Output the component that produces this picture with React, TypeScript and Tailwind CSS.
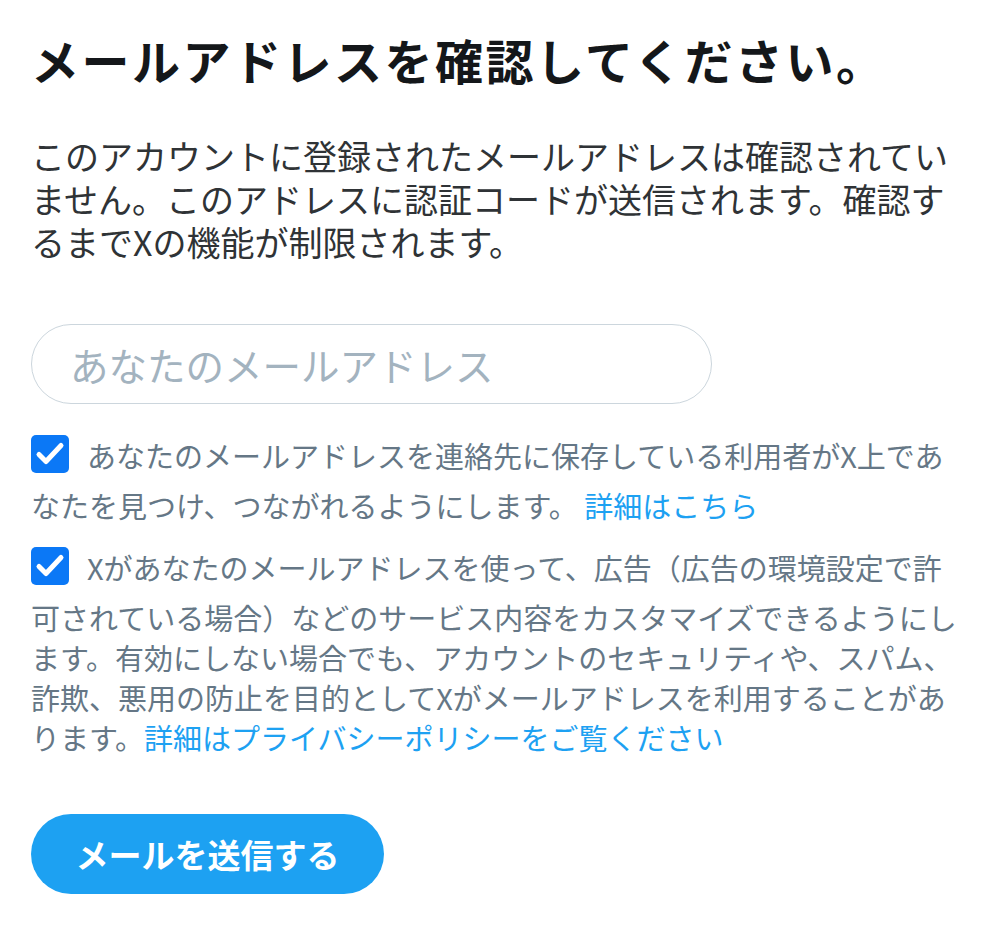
import React from "react";

// Inline checkbox drawn as an svg so its bottom sits just above the text baseline
function CheckMark() {
  return (
    <svg
      width="38"
      height="38"
      viewBox="0 0 38 38"
      className="inline-block mb-[12px] mr-[18px]"
      aria-hidden="true"
    >
      <rect x="0" y="0" width="38" height="38" rx="5" fill="#0b78f6" />
      <path
        d="M8 19.5 L15 26.5 L30 10.5"
        fill="none"
        stroke="#ffffff"
        strokeWidth="5"
        strokeLinecap="round"
        strokeLinejoin="round"
      />
    </svg>
  );
}

export default function App() {
  return (
    <div
      className="w-[999px] min-h-[935px] bg-white pl-[31px] pr-[33px] pt-[28px]"
      style={{ fontFamily: '"Noto Sans CJK JP", "Noto Sans", sans-serif' }}
    >
      {/* Title */}
      <h1 className="text-[48px] leading-[62px] tracking-[2.5px] font-bold text-[#14171a]">
        メールアドレスを確認してください。
      </h1>

      {/* Description */}
      <p className="mt-[44px] text-[34px] leading-[43px] text-[#2f3336]">
        このアカウントに登録されたメールアドレスは確認されていません。このアドレスに認証コードが送信されます。確認するまでXの機能が制限されます。
      </p>

      {/* Email field */}
      <input
        type="email"
        placeholder="あなたのメールアドレス"
        className="block mt-[61px] w-[681px] h-[80px] rounded-full border-[1.5px] border-[#ccd6dd] px-[38px] text-[38.5px] text-[#14171a] placeholder:text-[#a3b3bf] outline-none"
      />

      {/* Options */}
      <p className="mt-[31px] text-[29px] leading-[40px] text-[#657786]">
        <CheckMark />
        あなたのメールアドレスを連絡先に保存している利用者がX上であなたを見つけ、つながれるようにします。{" "}
        <a href="#" className="text-[#1da1f2]">
          詳細はこちら
        </a>
      </p>

      <p className="mt-[22px] text-[29px] leading-[40px] text-[#657786]">
        <CheckMark />
        Xがあなたのメールアドレスを使って、広告（広告の環境設定で許可されている場合）などのサービス内容をカスタマイズできるようにします。有効にしない場合でも、アカウントのセキュリティや、スパム、詐欺、悪用の防止を目的としてXがメールアドレスを利用することがあります。
        <a href="#" className="text-[#1da1f2]">
          詳細はプライバシーポリシーをご覧ください
        </a>
      </p>

      {/* Submit */}
      <button className="mt-[57px] h-[80px] w-[353px] rounded-full bg-[#1da1f2] text-[33px] font-bold text-white">
        メールを送信する
      </button>
    </div>
  );
}
